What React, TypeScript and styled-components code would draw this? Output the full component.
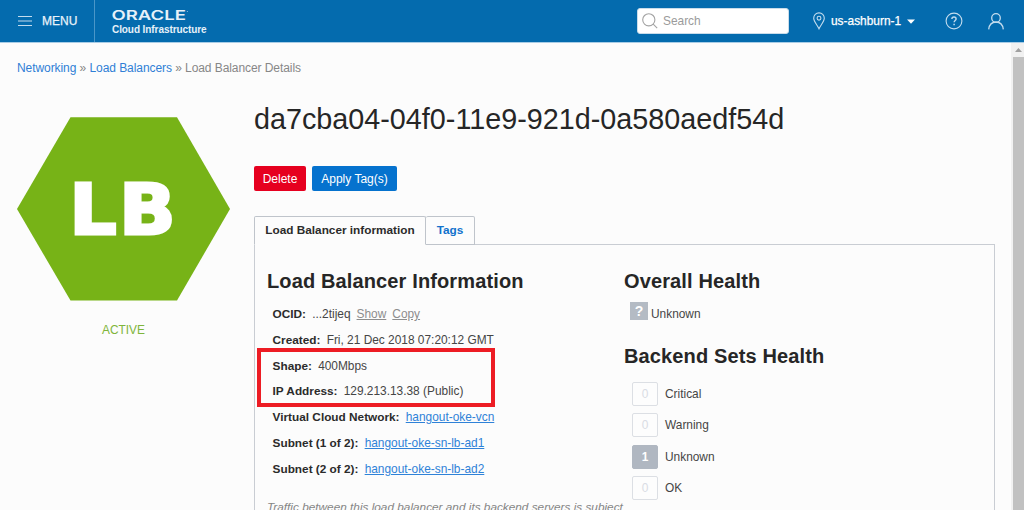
import React from 'react';
import styled, { createGlobalStyle } from 'styled-components';

const GlobalStyle = createGlobalStyle`
  * { box-sizing: border-box; }
  html, body { margin: 0; padding: 0; overflow: hidden; background: #fcfcfc; }
  body { font-family: "Liberation Sans", Arial, sans-serif; font-size: 11.9px; color: #454545; }
  h1, h2, ul { margin: 0; padding: 0; }
`;

const Page = styled.div`
  width: 1024px;
  height: 510px;
  overflow: hidden;
  display: flex;
  flex-direction: column;
`;

const TopBar = styled.header`
  flex: none;
  height: 43px;
  display: flex;
  align-items: stretch;
  background: #046bae;
  border-bottom: 1px solid #a9cde6;
  color: #fff;
`;

const MenuButton = styled.div`
  width: 95px;
  padding: 0 0 0 18px;
  display: flex;
  align-items: center;
  gap: 10px;
  border-right: 1px solid #4a96c8;
  font-size: 12px;
  color: #e9f3fa;
  -webkit-text-stroke: 0.25px #e9f3fa;
`;

const Brand = styled.div`
  padding: 7px 0 0 17px;
  display: flex;
  flex-direction: column;
`;

const BrandSub = styled.span`
  font-size: 10px;
  line-height: 13px;
  font-weight: 700;
  letter-spacing: -0.08px;
  color: #e6f1f9;
  white-space: nowrap;
`;

const Tools = styled.div`
  margin-left: auto;
  display: flex;
  align-items: center;
  padding-right: 20px;
`;

const SearchBox = styled.div`
  width: 152px;
  height: 26px;
  padding-left: 4px;
  display: flex;
  align-items: center;
  gap: 5px;
  background: #fff;
  border: 1px solid #c9dcea;
  border-radius: 3px;
  color: #9b9b9b;
`;

const Region = styled.div`
  margin-left: 24px;
  width: 103px;
  display: flex;
  align-items: center;
  gap: 6px;
  white-space: nowrap;
  -webkit-text-stroke: 0.25px #fff;
`;

const ToolIcon = styled.div<{ $gap: number }>`
  display: flex;
  margin-left: ${(p) => p.$gap}px;
`;

const Body = styled.div`
  flex: 1;
  min-height: 0;
  display: flex;
`;

const Main = styled.main`
  flex: 1;
  min-width: 0;
  padding-left: 17px;
  overflow: hidden;
`;

const ScrollTrack = styled.div`
  width: 13px;
  padding-left: 2px;
  display: flex;
  flex-direction: column;
  background: #f1f1f1;
`;

const ScrollArrow = styled.div`
  height: 14px;
  flex: none;
  display: flex;
  align-items: center;
  justify-content: center;
`;

const ScrollThumb = styled.div`
  flex: 1;
  background: #c1c1c1;
`;

const Breadcrumb = styled.nav`
  padding-top: 18px;
  line-height: 14px;
  font-size: 12px;
  letter-spacing: -0.07px;
  color: #878787;
  white-space: nowrap;
`;

const Crumb = styled.a`
  color: #2f7fd6;
`;

const Columns = styled.div`
  display: flex;
`;

const StatusColumn = styled.aside`
  width: 237px;
  flex: none;
  padding-top: 42px;
`;

const StatusLabel = styled.div`
  width: 213px;
  margin-top: 20px;
  line-height: 18px;
  text-align: center;
  color: #7fb53a;
`;

const Detail = styled.section`
  width: 741px;
  padding-top: 26px;
`;

const Title = styled.h1`
  font-size: 28.75px;
  line-height: 36px;
  font-weight: 400;
  color: #262626;
  white-space: nowrap;
`;

const Actions = styled.div`
  margin-top: 29px;
  display: flex;
  gap: 6px;
`;

const Button = styled.button<{ $tone: string; $width: number }>`
  width: ${(p) => p.$width}px;
  height: 25px;
  padding: 0;
  border: 0;
  border-radius: 2px;
  background: ${(p) => p.$tone};
  color: #fff;
  font: 400 12px "Liberation Sans", Arial, sans-serif;
  white-space: nowrap;
`;

const Tabs = styled.div`
  margin-top: 25px;
  display: flex;
  position: relative;
  z-index: 1;
`;

const Tab = styled.div<{ $active?: boolean; $width: number }>`
  width: ${(p) => p.$width}px;
  height: 29px;
  margin-bottom: -1px;
  border: 1px solid #bfc4cb;
  border-left-width: ${(p) => (p.$active ? 1 : 0)}px;
  border-bottom-color: ${(p) => (p.$active ? '#fcfcfc' : '#bfc4cb')};
  border-radius: 2px 2px 0 0;
  background: #fcfcfc;
  text-align: center;
  line-height: 27px;
  font-size: 11.8px;
  font-weight: 700;
  color: ${(p) => (p.$active ? '#2b2b2b' : '#1272cc')};
  white-space: nowrap;
`;

const Panel = styled.div`
  height: 300px;
  padding: 24px 0 0 12px;
  border: 1px solid #c9cdd3;
  display: flex;
`;

const InfoColumn = styled.div`
  width: 357px;
  flex: none;
`;

const SectionTitle = styled.h2`
  font-size: 20px;
  line-height: 24px;
  font-weight: 700;
  letter-spacing: 0.13px;
  color: #262626;
  white-space: nowrap;
`;

const Facts = styled.div`
  margin-top: 8px;
  padding-left: 5.6px;
  position: relative;
`;

const Fact = styled.div`
  height: 25.8px;
  line-height: 26px;
  display: flex;
  white-space: nowrap;
`;

const FactName = styled.span`
  margin-right: 6.2px;
  font-size: 11.8px;
  font-weight: 700;
  color: #2b2b2b;
`;

const FactLink = styled.a<{ $muted?: boolean }>`
  margin-left: ${(p) => (p.$muted ? 6 : 0)}px;
  color: ${(p) => (p.$muted ? '#8d8d8d' : '#2f82d8')};
  text-decoration: underline;
`;

const Highlight = styled.div`
  position: absolute;
  left: -10px;
  top: 47px;
  width: 238px;
  height: 59px;
  border: 4px solid #ed1c24;
`;

const Note = styled.p`
  margin: 17px 0 0;
  line-height: 16px;
  font-size: 11.8px;
  font-style: italic;
  color: #858585;
  white-space: nowrap;
`;

const HealthColumn = styled.div`
  flex: 1;
`;

const OverallStatus = styled.div`
  margin: 8px 0 23px 6px;
  height: 20px;
  display: flex;
  align-items: flex-start;
  gap: 3px;
  line-height: 26px;
`;

const UnknownBadge = styled.span`
  width: 18px;
  height: 18px;
  margin-top: 1px;
  background: #b4bbc4;
  color: #fff;
  font-size: 14px;
  line-height: 18px;
  font-weight: 700;
  text-align: center;
`;

const HealthList = styled.ul`
  margin: 14px 0 0 8px;
  list-style: none;
  display: flex;
  flex-direction: column;
  gap: 7.3px;
`;

const HealthRow = styled.li`
  height: 24px;
  display: flex;
  align-items: center;
  gap: 7px;
`;

const Count = styled.span<{ $filled: boolean }>`
  width: 26px;
  height: 24px;
  border: 1px solid ${(p) => (p.$filled ? '#b0b7c1' : '#dcdfe4')};
  border-radius: 2px;
  background: ${(p) => (p.$filled ? '#b0b7c1' : '#fdfdfd')};
  color: ${(p) => (p.$filled ? '#fff' : '#d9dce4')};
  font-weight: ${(p) => (p.$filled ? 700 : 400)};
  line-height: 23px;
  text-align: center;
`;

const facts = [
  { name: 'Created:', value: 'Fri, 21 Dec 2018 07:20:12 GMT' },
  { name: 'Shape:', value: '400Mbps' },
  { name: 'IP Address:', value: '129.213.13.38 (Public)' },
  { name: 'Virtual Cloud Network:', value: 'hangout-oke-vcn', link: true },
  { name: 'Subnet (1 of 2):', value: 'hangout-oke-sn-lb-ad1', link: true },
  { name: 'Subnet (2 of 2):', value: 'hangout-oke-sn-lb-ad2', link: true },
];

const health = [
  { label: 'Critical', count: 0 },
  { label: 'Warning', count: 0 },
  { label: 'Unknown', count: 1 },
  { label: 'OK', count: 0 },
];

const MenuIcon = () => (
  <svg width="14" height="12" viewBox="0 0 14 12" stroke="#c3dcee" strokeWidth="1">
    <path d="M0 1.5h14M0 6h14M0 10.5h14" />
  </svg>
);

const OracleMark = () => (
  <svg width="77" height="16" viewBox="0 -3 77 16">
    <text x="-0.5" y="10" textLength="74.5" lengthAdjust="spacingAndGlyphs" fontFamily="Inter, sans-serif" fontSize="13" fontWeight="600" fill="#e6f1f9">ORACLE</text>
    <circle cx="75.3" cy="1.4" r="0.5" fill="#b9d7ec" />
  </svg>
);

const SearchIcon = () => (
  <svg width="16" height="16" viewBox="0 0 16 16" fill="none" stroke="#a3a3a3" strokeWidth="1.1">
    <circle cx="6.8" cy="6.8" r="6.1" />
    <path d="M11.2 11.2l4 4" />
  </svg>
);

const PinIcon = () => (
  <svg width="12" height="18" viewBox="0 0 12 18" fill="none" stroke="#c3dcee" strokeWidth="1.1">
    <path d="M6 16.8C4.6 13.6.7 9.4.7 6.2a5.3 5.3 0 0 1 10.6 0c0 3.2-3.9 7.4-5.3 10.6z" />
    <circle cx="6" cy="6.2" r="1.9" />
  </svg>
);

const HelpIcon = () => (
  <svg width="18" height="18" viewBox="0 0 18 18" fill="none" stroke="#c3dcee" strokeWidth="1.1">
    <circle cx="9" cy="9" r="7.9" />
    <path d="M6.9 7.1c0-1.3.9-2.1 2.1-2.1s2.100.8 2.100 1.900c0 1.500-2 1.600-2 3.400" strokeWidth="1.4" />
    <path d="M9.1 11.7v1.5" strokeWidth="1.5" />
  </svg>
);

const UserIcon = () => (
  <svg width="16" height="17" viewBox="0 0 16 17" fill="none" stroke="#c3dcee" strokeWidth="1.3">
    <circle cx="8" cy="5" r="4.3" />
    <path d="M.7 16.300c.5-3.900 2.900-7.300 7.300-7.300s6.800 3.400 7.300 7.300" />
  </svg>
);

const LoadBalancerBadge = () => (
  <svg width="213" height="184" viewBox="0 0 213 184">
    <polygon points="53.5,0.3 160,0.3 213,92 160,183.500 53.500,183.500 0,92" fill="#77b317" />
    <text x="49.1 95.6" y="117.5" transform="scale(1.07 1)" fontFamily="DejaVu Sans, sans-serif" fontWeight="700" fontSize="69" fill="#fff" stroke="#fff" strokeWidth="3">LB</text>
  </svg>
);

const BadgeFrame = styled.div`
  height: 184px;
  display: flex;
`;

export default function App() {
  return (
    <Page>
      <GlobalStyle />
      <TopBar>
        <MenuButton>
          <MenuIcon />
          MENU
        </MenuButton>
        <Brand>
          <OracleMark />
          <BrandSub>Cloud Infrastructure</BrandSub>
        </Brand>
        <Tools>
          <SearchBox>
            <SearchIcon />
            Search
          </SearchBox>
          <Region>
            <PinIcon />
            us-ashburn-1
            <svg width="8" height="5" viewBox="0 0 8 5"><path d="M0 .5h8L4 4.800z" fill="#fff" /></svg>
          </Region>
          <ToolIcon $gap={29}><HelpIcon /></ToolIcon>
          <ToolIcon $gap={25}><UserIcon /></ToolIcon>
        </Tools>
      </TopBar>
      <Body>
        <Main>
          <Breadcrumb>
            <Crumb>Networking</Crumb> » <Crumb>Load Balancers</Crumb> » Load Balancer Details
          </Breadcrumb>
          <Columns>
            <StatusColumn>
              <BadgeFrame><LoadBalancerBadge /></BadgeFrame>
              <StatusLabel>ACTIVE</StatusLabel>
            </StatusColumn>
            <Detail>
              <Title>da7cba04-04f0-11e9-921d-0a580aedf54d</Title>
              <Actions>
                <Button $tone="#e6001f" $width={52}>Delete</Button>
                <Button $tone="#0572ce" $width={85}>Apply Tag(s)</Button>
              </Actions>
              <Tabs>
                <Tab $active $width={172}>Load Balancer information</Tab>
                <Tab $width={49}>Tags</Tab>
              </Tabs>
              <Panel>
                <InfoColumn>
                  <SectionTitle>Load Balancer Information</SectionTitle>
                  <Facts>
                    <Fact>
                      <FactName>OCID:</FactName>
                      ...2tijeq
                      <FactLink $muted>Show</FactLink>
                      <FactLink $muted>Copy</FactLink>
                    </Fact>
                    {facts.map((f) => (
                      <Fact key={f.name}>
                        <FactName>{f.name}</FactName>
                        {f.link ? <FactLink>{f.value}</FactLink> : f.value}
                      </Fact>
                    ))}
                    <Highlight />
                  </Facts>
                  <Note>Traffic between this load balancer and its backend servers is subject</Note>
                </InfoColumn>
                <HealthColumn>
                  <SectionTitle>Overall Health</SectionTitle>
                  <OverallStatus>
                    <UnknownBadge>?</UnknownBadge>
                    Unknown
                  </OverallStatus>
                  <SectionTitle>Backend Sets Health</SectionTitle>
                  <HealthList>
                    {health.map((h) => (
                      <HealthRow key={h.label}>
                        <Count $filled={h.count > 0}>{h.count}</Count>
                        {h.label}
                      </HealthRow>
                    ))}
                  </HealthList>
                </HealthColumn>
              </Panel>
            </Detail>
          </Columns>
        </Main>
        <ScrollTrack>
          <ScrollArrow>
            <svg width="7" height="4" viewBox="0 0 7 4"><path d="M0 4h7L3.500 0z" fill="#a0a0a0" /></svg>
          </ScrollArrow>
          <ScrollThumb />
        </ScrollTrack>
      </Body>
    </Page>
  );
}
